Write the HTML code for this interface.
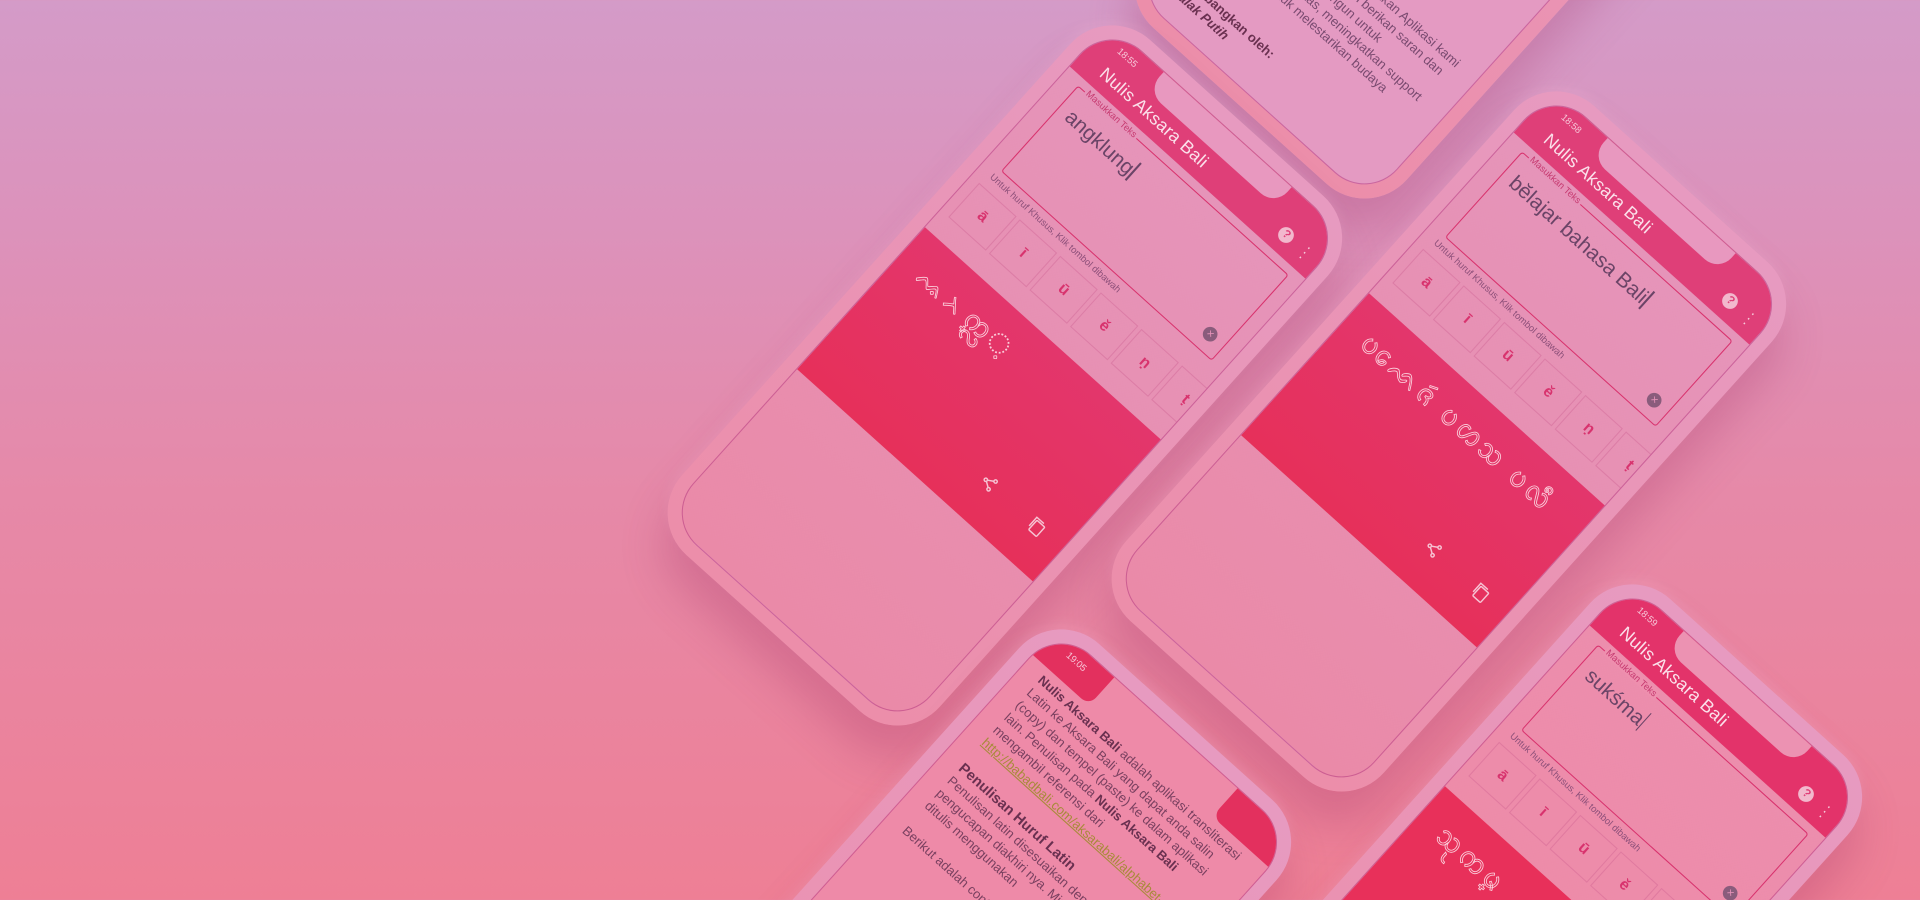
<!DOCTYPE html>
<html><head><meta charset="utf-8">
<style>
html{margin:0;padding:0;width:1920px;height:900px;overflow:hidden;
background:linear-gradient(180deg,#d49bc8 0%,#dc92bb 25%,#e689a8 55%,#ee7f95 100%)}
body{margin:0;padding:0;width:1920px;height:900px;overflow:hidden;position:relative;
font-family:"Liberation Sans","DejaVu Sans",sans-serif}
.phone{position:absolute;width:330px;height:660px;border-radius:54px;
background:linear-gradient(180deg,#e79ac0,#ec8eaa);transform-origin:0 0;transform:rotate(42deg) scale(1.05);
box-shadow:18px 26px 40px rgba(160,50,100,.28),-4px -4px 10px rgba(255,200,230,.15)}
.screen{position:absolute;left:13px;top:13px;right:13px;bottom:13px;border-radius:42px;overflow:hidden;
background:linear-gradient(180deg,#e595bb,#ea8aa8);border:1px solid rgba(170,40,120,.45)}
.hdr{position:absolute;left:0;top:0;right:0;height:56px;background:#df3f78}
.notch{position:absolute;left:70px;top:0;width:164px;height:24px;background:#e898bf;border-radius:0 0 18px 18px}
.time{position:absolute;left:24px;top:8px;color:#f7c6d8;font-size:9px}
.title{position:absolute;left:26px;top:29px;color:#fbe0ea;font-size:17px;letter-spacing:.3px}
.q{position:absolute;right:34px;top:30px;width:15px;height:15px;border-radius:50%;background:#f2b8cd;color:#df3f78;font-size:11px;text-align:center;line-height:15px;font-weight:bold}
.dots{position:absolute;right:14px;top:28px;color:#f7d0de;font-size:14px;line-height:6px;width:6px;text-align:center}
.inp{position:absolute;left:18px;top:64px;width:268px;height:108px;border:1.5px solid #d8336e;border-radius:3px}
.lbl{position:absolute;left:8px;top:-7px;font-size:9px;color:#c63a70;background:#e693b9;padding:0 2px}
.txt{position:absolute;left:10px;top:14px;font-size:20px;color:#6b4467}
.txt i{display:inline-block;width:1.5px;height:22px;background:#6b4467;vertical-align:-4px;margin-left:1px}
.clr{position:absolute;right:10px;bottom:10px;width:14px;height:14px;border-radius:50%;background:#8a5c7c;color:#e693b9;font-size:11px;line-height:14px;text-align:center}
.help{position:absolute;left:14px;top:178px;font-size:9px;color:#8c4f79}
.btns{position:absolute;left:10px;top:196px;display:flex}
.btns span{width:46px;height:42px;border:1px solid rgba(200,90,140,.35);color:#d8336e;font-size:15px;font-weight:bold;text-align:center;line-height:42px;margin-right:4px}
.out{position:absolute;left:0;top:262px;width:304px;height:182px;background:linear-gradient(180deg,#e3366c,#e6305a)}
.bal{position:absolute;left:26px;top:16px;color:transparent;-webkit-text-stroke:.8px #fbd0dc;font-size:26px;letter-spacing:3px;font-family:"DejaVu Serif",serif}
.ico{position:absolute}
.about{position:absolute;left:20px;top:30px;width:262px;color:#7a4060;font-size:12.5px;line-height:16px}
.about b{color:#6a3050}
.link{color:#a88a3a;text-decoration:underline}
</style></head><body>

<div class="phone" style="left:1575px;top:-525px">
 <div class="screen" style="background:#e49ac2">
  <div class="about" style="top:470px;color:#7a4a70">Terima kasih telah menggunakan Aplikasi kami Nulis Aksara Bali. Silahkan berikan saran dan masukan yang membangun untuk meningkatkan kualitas, meningkatkan support Aplikasi, dan untuk melestarikan budaya Nusantara<br><br><b>Dikembangkan oleh:</b><br><b><i>D'Jalak Putih</i></b></div>
 </div>
</div>

<div class="phone" style="left:1108px;top:2px">
 <div class="screen">
  <div class="hdr"></div><div class="notch"></div>
  <div class="time">18:55</div><div class="title">Nulis Aksara Bali</div>
  <div class="q">?</div><div class="dots">·<br>·<br>·</div>
  <div class="inp"><div class="lbl">Masukkan Teks</div><div class="txt">angklung<i></i></div><div class="clr">×</div></div>
  <div class="help">Untuk huruf Khusus, Klik tombol dibawah</div>
  <div class="btns"><span>ā</span><span>ī</span><span>ū</span><span>ě</span><span>ṇ</span><span>ṭ</span></div>
  <div class="out"><div class="bal">ᨕᨂ᩠ᨠᩖᨘ</div>
   <svg class="ico" style="left:200px;top:132px" width="16" height="16" viewBox="0 0 16 16" fill="none" stroke="#f6c3d3" stroke-width="1.4"><circle cx="12" cy="3" r="1.6"/><circle cx="4" cy="8" r="1.6"/><circle cx="12" cy="13" r="1.6"/><path d="M5.5 7.2L10.5 4M5.5 8.8L10.5 12"/></svg>
   <svg class="ico" style="left:262px;top:132px" width="16" height="18" viewBox="0 0 16 18" fill="none" stroke="#f6c3d3" stroke-width="1.4"><rect x="4" y="4" width="10" height="12" rx="1"/><path d="M2 13V2h9"/></svg>
  </div>
 </div>
</div>

<div class="phone" style="left:1552px;top:68px">
 <div class="screen">
  <div class="hdr"></div><div class="notch"></div>
  <div class="time">18:58</div><div class="title">Nulis Aksara Bali</div>
  <div class="q">?</div><div class="dots">·<br>·<br>·</div>
  <div class="inp"><div class="lbl">Masukkan Teks</div><div class="txt">bĕlajar bahasa Bali<i></i></div><div class="clr">×</div></div>
  <div class="help">Untuk huruf Khusus, Klik tombol dibawah</div>
  <div class="btns"><span>ā</span><span>ī</span><span>ū</span><span>ě</span><span>ṇ</span><span>ṭ</span></div>
  <div class="out"><div class="bal">ᨷᩮᨒᨩᩢ ᨷᩉᩈ ᨷᩃᩥ</div>
   <svg class="ico" style="left:200px;top:132px" width="16" height="16" viewBox="0 0 16 16" fill="none" stroke="#f6c3d3" stroke-width="1.4"><circle cx="12" cy="3" r="1.6"/><circle cx="4" cy="8" r="1.6"/><circle cx="12" cy="13" r="1.6"/><path d="M5.5 7.2L10.5 4M5.5 8.8L10.5 12"/></svg>
   <svg class="ico" style="left:262px;top:132px" width="16" height="18" viewBox="0 0 16 18" fill="none" stroke="#f6c3d3" stroke-width="1.4"><rect x="4" y="4" width="10" height="12" rx="1"/><path d="M2 13V2h9"/></svg>
  </div>
 </div>
</div>

<div class="phone" style="left:1057px;top:606px">
 <div class="screen" style="background:#ee8aa8">
  <div style="position:absolute;left:0;top:0;width:72px;height:36px;background:#e3305e;border-bottom-right-radius:10px"></div>
  <div style="position:absolute;right:0;top:0;width:72px;height:36px;background:#e3305e;border-bottom-left-radius:10px"></div>
  <div class="time">19:05</div>
  <div class="about" style="top:40px"><b>Nulis Aksara Bali</b> adalah aplikasi transliterasi Latin ke Aksara Bali yang dapat anda salin (copy) dan tempel (paste) ke dalam aplikasi lain. Penulisan pada <b>Nulis Aksara Bali</b> mengambil referensi dari <span class="link">http://babadbali.com/aksarabali/alphabet-c.htm</span><br><br><b style="font-size:14px">Penulisan Huruf Latin</b><br>Penulisan latin disesuaikan dengan pengucapan diakhiri nya. Misalkan penulisan ditulis menggunakan<br><br>Berikut adalah contoh transliterasi</div>
 </div>
</div>

<div class="phone" style="left:1628px;top:561px">
 <div class="screen" style="background:linear-gradient(180deg,#ec8eae,#ef88a2)">
  <div class="hdr" style="background:#e3336a"></div><div class="notch" style="background:#ec92b2"></div>
  <div class="time">18:59</div><div class="title">Nulis Aksara Bali</div>
  <div class="q">?</div><div class="dots">·<br>·<br>·</div>
  <div class="inp"><div class="lbl" style="background:#ee8fae">Masukkan Teks</div><div class="txt">sukśma<i></i></div><div class="clr">×</div></div>
  <div class="help">Untuk huruf Khusus, Klik tombol dibawah</div>
  <div class="btns"><span>ā</span><span>ī</span><span>ū</span><span>ě</span><span>ṇ</span><span>ṭ</span></div>
  <div class="out" style="background:#e8305a"><div class="bal">ᩈᩩᨠ᩠ᨾ</div></div>
 </div>
</div>

</body></html>
